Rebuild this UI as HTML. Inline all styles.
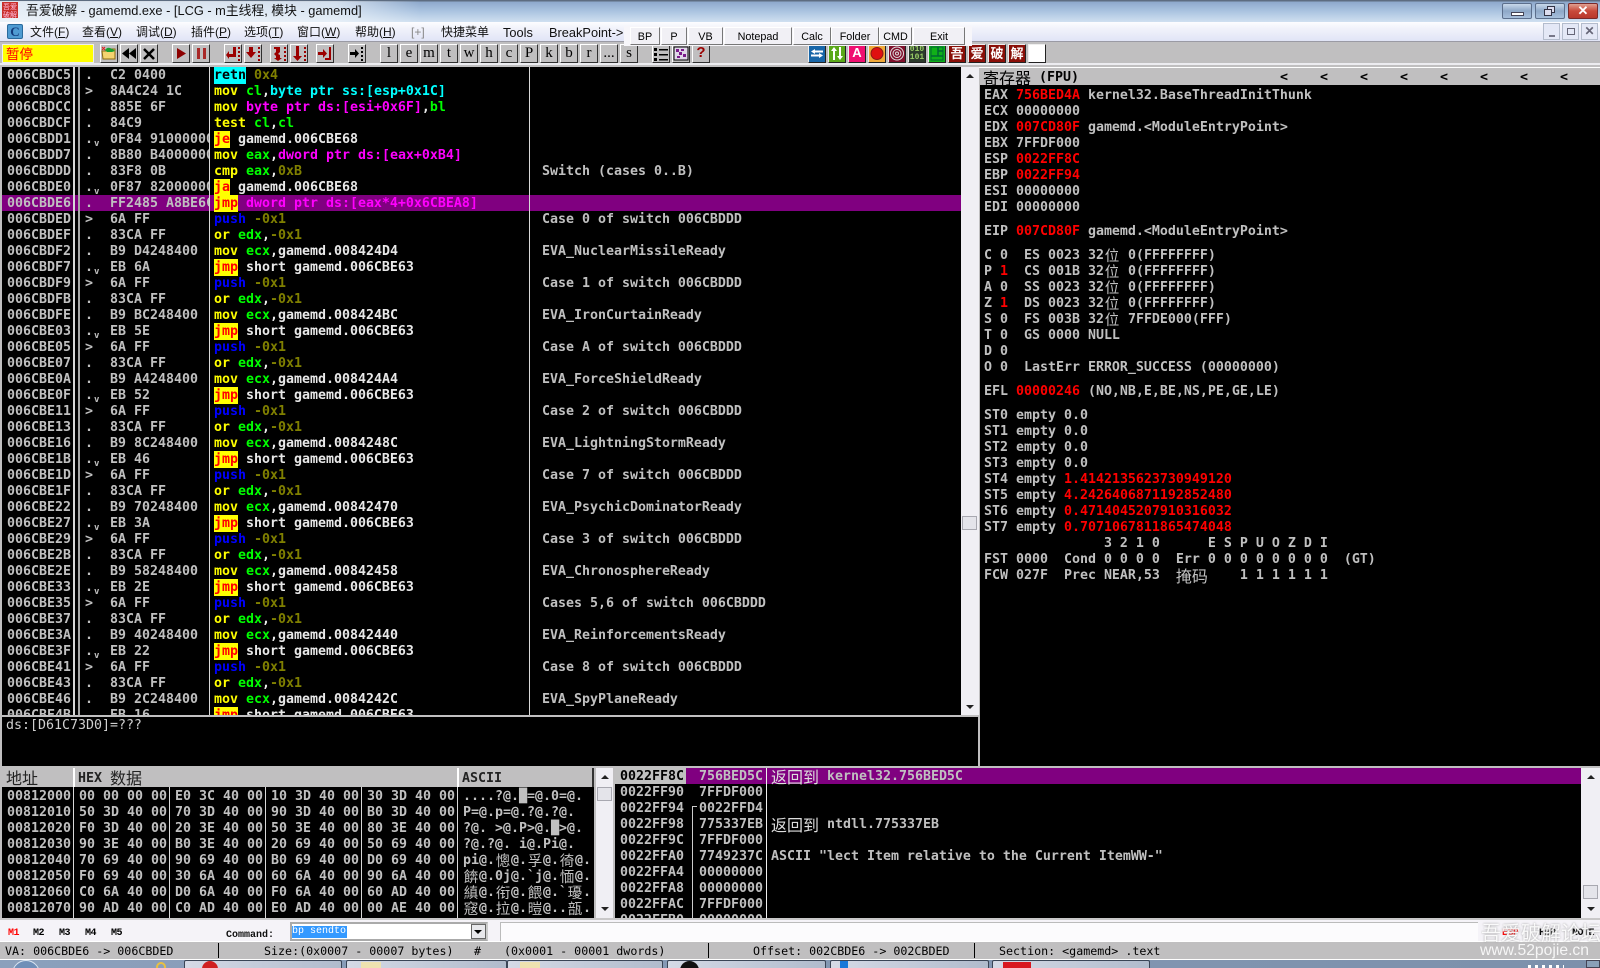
<!DOCTYPE html>
<html><head><meta charset="utf-8"><title>gamemd</title>
<style>
html,body{margin:0;padding:0}
html{overflow:hidden;width:1600px;height:968px}
body{width:1600px;height:968px;overflow:hidden;background:#c0bfc0;position:relative;font-family:"Liberation Sans","Noto Sans CJK SC",sans-serif}
div,span,svg{box-sizing:border-box}
.a{position:absolute}
.t{position:absolute;margin-top:1px;white-space:pre;font:bold 13.29px/16px "DejaVu Sans Mono","Liberation Mono","Noto Sans CJK SC",monospace;color:#c0c0c0}
.t i{font-style:normal}
.y{color:#ff0}.g{color:#0f0}.m{color:#f0f}.c{color:#0ff}.o{color:#808000}.b{color:#00f}.r{color:#f00}
.j{background:#ff0;color:#f00;display:inline-block;height:16px;line-height:16px;vertical-align:top;box-shadow:0 -1px 0 #ff0}
.w{color:#e8e8e8}
.k{display:inline-block;width:16px;height:16px;font:400 14.5px/16px "Noto Sans CJK SC",sans-serif;vertical-align:top;text-align:center;overflow:visible}
.s2{width:32px}.s3{width:48px}
.v{font:bold 9px/0 "DejaVu Sans Mono",monospace;position:relative;top:3px;margin-left:1px}
.l{position:absolute;background:#d8d8d8}
.btn{position:absolute;top:44px;width:18px;height:19px;background:#c0bfc0;border:1px solid;border-color:#fff #303030 #303030 #fff;text-align:center;font:15px/16px "Liberation Serif",serif;color:#000}
.btn svg{position:absolute;left:0;top:0}
.ic{position:absolute;top:44px;width:18px;height:19px;border:1px solid;border-color:#eee #222 #222 #eee;overflow:hidden;text-align:center}
.cj{background:#8a0f08;color:#fff;font:bold 13px/16px "Noto Sans CJK SC",sans-serif}
.tb{position:absolute;top:27px;height:18px;background:#f1f0f5;border:1px solid;border-color:#fff #777 #777 #fff;font:10.8px/18px "Liberation Sans",sans-serif;color:#000;text-align:center}
.m1{position:absolute;top:23px;font:12px/19px "Liberation Sans","Noto Sans CJK SC",sans-serif;color:#111;white-space:pre}
.m1 u{text-decoration:underline}
.sb{position:absolute;background:#f0eff4}
.th{position:absolute;background:#e4e4ea;border:1px solid #a8a8b0}
.ar{position:absolute;width:0;height:0;border-left:4px solid transparent;border-right:4px solid transparent}
.up{border-bottom:4px solid #222}.dn{border-top:4px solid #222}
.st{position:absolute;top:943px;font:11.67px/17px "DejaVu Sans Mono","Liberation Mono",monospace;color:#000;white-space:pre;letter-spacing:0}
.mm{position:absolute;top:927px;font:bold 10px/14px "Liberation Mono",monospace;color:#000;letter-spacing:-.5px}
.tab{position:absolute;top:960px;height:8px;background:linear-gradient(90deg,#d5dae6,#b0bbcc);border:1px solid #3a4556;border-bottom:0;border-radius:2px 2px 0 0;overflow:hidden}
</style></head><body>

<!-- title bar -->
<div class="a" style="left:0;top:0;width:1600px;height:22px;background:linear-gradient(#5d6c80 0,#5d6c80 1px,#8ea9cc 2px,#aac3e0 50%,#d0e0f0 100%)"></div>
<div class="a" style="left:0;top:1px;width:420px;height:21px;background:linear-gradient(90deg,rgba(240,245,250,.85),rgba(240,245,250,.7) 80%,rgba(240,245,250,0))"></div>
<svg class="a" style="left:2px;top:2px" width="16" height="16"><rect width="16" height="16" fill="#c8302c"/><text x="1" y="7" font-size="7" fill="#fbd" font-family="Noto Sans CJK SC">吾爱</text><text x="1" y="15" font-size="7" fill="#fbd" font-family="Noto Sans CJK SC">破解</text></svg>
<div class="a" style="left:26px;top:2px;font:12.8px/18px 'Liberation Sans','Noto Sans CJK SC',sans-serif;color:#111;white-space:pre">吾爱破解 - gamemd.exe - [LCG - m主线程, 模块 - gamemd]</div>
<div class="a" style="left:1502px;top:3px;width:30px;height:16px;border:1px solid #5c6f8c;border-radius:2px;background:linear-gradient(#c8d8ea,#8ea8c8 50%,#a8c0dc)"><div class="a" style="left:8px;top:8px;width:13px;height:4px;background:#fff;border:1px solid #445"></div></div>
<div class="a" style="left:1535px;top:3px;width:30px;height:16px;border:1px solid #5c6f8c;border-radius:2px;background:linear-gradient(#c8d8ea,#8ea8c8 50%,#a8c0dc)"><div class="a" style="left:11px;top:2px;width:8px;height:7px;background:#dde;border:1px solid #334"></div><div class="a" style="left:8px;top:5px;width:8px;height:7px;background:#dde;border:1px solid #334"></div></div>
<div class="a" style="left:1568px;top:3px;width:30px;height:16px;border:1px solid #7a2a2a;border-radius:2px;background:linear-gradient(#e0a090,#c8493a 50%,#b8382c);color:#fff;font:bold 13px/13px 'Liberation Sans',sans-serif;text-align:center">✕</div>

<!-- menu bar -->
<div class="a" style="left:0;top:22px;width:1600px;height:20px;background:linear-gradient(#fdfdff,#f2f3fb 30%,#dfe3f6)"></div>
<div class="a" style="left:0;top:41px;width:1600px;height:1px;background:#9a9aa4"></div>
<div class="a" style="left:7px;top:24px;width:16px;height:15px;background:#4f9bd2;border:1px solid #2a6a9c;border-radius:2px;font:bold 13px/13px 'Liberation Serif',serif;color:#123a7a;text-align:center">C</div>
<div class="m1" style="left:30px">文件(<u>F</u>)</div>
<div class="m1" style="left:82px">查看(<u>V</u>)</div>
<div class="m1" style="left:136px">调试(<u>D</u>)</div>
<div class="m1" style="left:191px">插件(<u>P</u>)</div>
<div class="m1" style="left:244px">选项(<u>T</u>)</div>
<div class="m1" style="left:297px">窗口(<u>W</u>)</div>
<div class="m1" style="left:355px">帮助(<u>H</u>)</div>
<div class="m1" style="left:411px;color:#888">[+]</div>
<div class="m1" style="left:441px">快捷菜单</div>
<div class="m1" style="left:503px;font-size:12.8px">Tools</div>
<div class="m1" style="left:549px;font-size:12.8px">BreakPoint-&gt;</div>
<div class="a" style="left:1543px;top:23px;width:17px;height:17px;background:#e4e8f6;border:1px solid #b4bccc"><div class="a" style="left:5px;top:11px;width:6px;height:2px;background:#778"></div></div>
<div class="a" style="left:1562px;top:23px;width:17px;height:17px;background:#e4e8f6;border:1px solid #b4bccc"><div class="a" style="left:4px;top:4px;width:8px;height:7px;border:1px solid #667"></div></div>
<div class="a" style="left:1581px;top:23px;width:17px;height:17px;background:#e4e8f6;border:1px solid #b4bccc;font:bold 12px/15px 'Liberation Sans',sans-serif;color:#667;text-align:center">✕</div>

<!-- toolbar -->
<div class="a" style="left:0;top:42px;width:1600px;height:23px;background:#c0bfc0;border-bottom:2px solid #ececf0"></div>
<div class="a" style="left:2px;top:44px;width:92px;height:19px;background:#ff0;border:1px solid #eee;font:13.5px/17px 'Noto Sans CJK SC',sans-serif;color:#f00;padding-left:3px">暂停</div>

<div class="btn" style="left:100px"><svg width="16" height="17"><path d="M1 6h4l2-2h7v10H2z" fill="#f4d470" stroke="#8a6a10"/><path d="M4 5q2-3 5-2t5 3l-3 1H6z" fill="#19a030"/><path d="M1 2l3 3M4 2L1 5" stroke="#d22" stroke-width="1"/></svg></div>
<div class="btn" style="left:120px"><svg width="16" height="17"><path d="M8 3v11L1 8.500zM15 3v11L8 8.500z" fill="#000"/></svg></div>
<div class="btn" style="left:140px"><svg width="16" height="17"><path d="M3 4l10 10M13 4L3 14" stroke="#000" stroke-width="2.500"/></svg></div>
<div class="btn" style="left:172px"><svg width="16" height="17"><path d="M4 3l9 5.500-9 5.500z" fill="#8c0000"/></svg></div>
<div class="btn" style="left:192px"><svg width="16" height="17"><path d="M4 3h3v11H4zM10 3h3v11h-3z" fill="#a82828"/></svg></div>
<div class="btn" style="left:224px"><svg width="16" height="17"><path d="M3 2h3v7h4V6l3 4-3 4v-2H3z" transform="matrix(-1 0 0 1 14 0)" fill="#9c0000"/><path d="M13 2h2v2h-2zM13 6h2v2h-2zM13 10h2v2h-2zM13 14h2v2h-2z" fill="#9c0000"/></svg></div>
<div class="btn" style="left:244px"><svg width="16" height="17"><path d="M4 2h4v5h3l-5 6-5-6h3z" fill="#9c0000"/><path d="M13 2h2v2h-2zM13 6h2v2h-2zM13 10h2v2h-2zM13 14h2v2h-2z" fill="#9c0000"/></svg></div>
<div class="btn" style="left:270px"><svg width="16" height="17"><path d="M3 2h6v5L7 9l2 1v3h2l-4 3-4-3h2v-2l-2-2 2-2V4H3z" fill="#9c0000"/><path d="M13 2h2v2h-2zM13 6h2v2h-2zM13 10h2v2h-2zM13 14h2v2h-2z" fill="#9c0000"/></svg></div>
<div class="btn" style="left:290px"><svg width="16" height="17"><path d="M5 1h3v10h3l-4.500 5L2 11h3z" fill="#9c0000"/><path d="M13 2h2v2h-2zM13 6h2v2h-2zM13 10h2v2h-2zM13 14h2v2h-2z" fill="#9c0000"/></svg></div>
<div class="btn" style="left:316px"><svg width="16" height="17"><path d="M1 7h5V4l4 4.500L6 13v-3H1z" fill="#9c0000"/><path d="M12 2h2v13H8v-2h4z" fill="#9c0000"/></svg></div>
<div class="btn" style="left:348px"><svg width="16" height="17"><path d="M1 7h5V4l4 4.500L6 13v-3H1z" fill="#000"/><path d="M12 2h2v2h-2zM12 6h2v2h-2zM12 10h2v2h-2zM12 14h2v2h-2z" fill="#000"/></svg></div>

<div class="btn" style="left:380px">l</div><div class="btn" style="left:400px">e</div><div class="btn" style="left:420px">m</div><div class="btn" style="left:440px">t</div><div class="btn" style="left:460px">w</div><div class="btn" style="left:480px">h</div><div class="btn" style="left:500px">c</div><div class="btn" style="left:520px">P</div><div class="btn" style="left:540px">k</div><div class="btn" style="left:560px">b</div><div class="btn" style="left:580px">r</div><div class="btn" style="left:600px">...</div><div class="btn" style="left:620px">s</div>
<div class="btn" style="left:652px"><svg width="16" height="17"><path d="M1 3h3v3H1zM1 8h3v3H1zM1 13h3v3H1zM6 4h9v1.500H6zM6 9h9v1.500H6zM6 14h9v1.500H6z" fill="#000"/></svg></div>
<div class="btn" style="left:672px"><svg width="16" height="17"><rect x="1" y="2" width="14" height="13" fill="#e0d8e8" stroke="#000"/><path d="M3 4h3v3H3zM8 4h3v2H8zM6 7h3v3H6zM10 9h3v3h-3zM4 11h3v2H4z" fill="#7a1a8a"/></svg></div>
<div class="btn" style="left:692px;color:#900;font:bold 15px/16px 'Liberation Sans',sans-serif">?</div>

<!-- colored icons -->
<div class="ic" style="left:808px;background:#1866a8"><svg width="16" height="17"><path d="M6 4L2 6.500 6 9V7.500h8v-2H6zM10 8l4 2.500-4 2.500v-1.500H2v-2h8z" fill="#fff"/></svg></div>
<div class="ic" style="left:828px;background:#5aa818"><svg width="16" height="17"><path d="M5 2l3 4H6v9H4V6H2zM11 15l-3-4h2V2h2v9h2z" fill="#fff"/></svg></div>
<div class="ic" style="left:848px;background:#f01070;color:#fff;font:bold 13px/16px 'Liberation Sans',sans-serif">A</div>
<div class="ic" style="left:868px;background:#f0a838"><svg width="16" height="17"><circle cx="8" cy="8.500" r="6" fill="#e01010" stroke="#8a1818"/></svg></div>
<div class="ic" style="left:888px;background:#80102c"><svg width="16" height="17" fill="none" stroke="#ddd"><circle cx="8" cy="8.500" r="6.500"/><circle cx="8" cy="8.500" r="4"/><circle cx="8" cy="8.500" r="1.500"/></svg></div>
<div class="ic" style="left:908px;background:#2c3a2c;color:#9c6;font:bold 8px/8px 'Liberation Mono',monospace;padding-top:1px">010<br>101</div>
<div class="ic" style="left:928px;background:#10b018"><svg width="16" height="17" fill="none" stroke="#063"><rect x="2" y="2" width="12" height="13"/><path d="M2 11h12M9 2v9M9 6h5" stroke-width="1.500"/></svg></div>
<div class="ic cj" style="left:948px">吾</div><div class="ic cj" style="left:968px">爱</div><div class="ic cj" style="left:988px">破</div><div class="ic cj" style="left:1008px">解</div>
<div class="ic" style="left:1028px;background:#fff"></div>

<!-- BP strip -->
<div class="a" style="left:624px;top:26px;width:348px;height:20px;background:#f7f6fa"></div>
<div class="tb" style="left:630px;width:30px">BP</div><div class="tb" style="left:661px;width:26px">P</div><div class="tb" style="left:688px;width:35px">VB</div><div class="tb" style="left:724px;width:68px">Notepad</div><div class="tb" style="left:793px;width:38px">Calc</div><div class="tb" style="left:831px;width:48px">Folder</div><div class="tb" style="left:879px;width:33px">CMD</div><div class="tb" style="left:913px;width:52px">Exit</div>

<!-- disasm -->
<div class="a" style="left:2px;top:67px;width:959px;height:648px;background:#000"></div>
<div class="a" style="left:2px;top:195px;width:959px;height:16px;background:#800080"></div>
<div class="a" style="left:0;top:67px;width:961px;height:648px;overflow:hidden">
<div class="t" style="left:7px;top:0">006CBDC5
006CBDC8
006CBDCC
006CBDCF
006CBDD1
006CBDD7
006CBDDD
006CBDE0
006CBDE6
006CBDED
006CBDEF
006CBDF2
006CBDF7
006CBDF9
006CBDFB
006CBDFE
006CBE03
006CBE05
006CBE07
006CBE0A
006CBE0F
006CBE11
006CBE13
006CBE16
006CBE1B
006CBE1D
006CBE1F
006CBE22
006CBE27
006CBE29
006CBE2B
006CBE2E
006CBE33
006CBE35
006CBE37
006CBE3A
006CBE3F
006CBE41
006CBE43
006CBE46
006CBE4B</div>
<div class="t" style="left:85px;top:0">.
&gt;
.
.
.<span class="v">v</span>
.
.
.<span class="v">v</span>
.
&gt;
.
.
.<span class="v">v</span>
&gt;
.
.
.<span class="v">v</span>
&gt;
.
.
.<span class="v">v</span>
&gt;
.
.
.<span class="v">v</span>
&gt;
.
.
.<span class="v">v</span>
&gt;
.
.
.<span class="v">v</span>
&gt;
.
.
.<span class="v">v</span>
&gt;
.
.
.<span class="v">v</span></div>
<div class="a" style="left:110px;top:0;width:99px;height:648px;overflow:hidden"><div class="t" style="left:0;top:0">C2 0400
8A4C24 1C
885E 6F
84C9
0F84 91000000
8B80 B4000000
83F8 0B
0F87 82000000
FF2485 A8BE6C00
6A FF
83CA FF
B9 D4248400
EB 6A
6A FF
83CA FF
B9 BC248400
EB 5E
6A FF
83CA FF
B9 A4248400
EB 52
6A FF
83CA FF
B9 8C248400
EB 46
6A FF
83CA FF
B9 70248400
EB 3A
6A FF
83CA FF
B9 58248400
EB 2E
6A FF
83CA FF
B9 40248400
EB 22
6A FF
83CA FF
B9 2C248400
EB 16</div></div>
<div class="t w" style="left:214px;top:0"><i style="background:#0ff;color:#000;display:inline-block;vertical-align:top;height:16px;line-height:16px;box-shadow:0 -1px 0 #0ff">retn</i> <i class="o">0x4</i>
<i class="y">mov</i> <i class="g">cl</i>,<i class="c">byte ptr ss:[esp+0x1C]</i>
<i class="y">mov</i> <i class="m">byte ptr ds:[esi+0x6F]</i>,<i class="g">bl</i>
<i class="y">test</i> <i class="g">cl</i>,<i class="g">cl</i>
<i class="j">je</i> gamemd.006CBE68
<i class="y">mov</i> <i class="g">eax</i>,<i class="m">dword ptr ds:[eax+0xB4]</i>
<i class="y">cmp</i> <i class="g">eax</i>,<i class="o">0xB</i>
<i class="j">ja</i> gamemd.006CBE68
<i class="j">jmp</i> <i class="m">dword ptr ds:[eax*4+0x6CBEA8]</i>
<i class="b">push</i> <i class="o">-0x1</i>
<i class="y">or</i> <i class="g">edx</i>,<i class="o">-0x1</i>
<i class="y">mov</i> <i class="g">ecx</i>,gamemd.008424D4
<i class="j">jmp</i> short gamemd.006CBE63
<i class="b">push</i> <i class="o">-0x1</i>
<i class="y">or</i> <i class="g">edx</i>,<i class="o">-0x1</i>
<i class="y">mov</i> <i class="g">ecx</i>,gamemd.008424BC
<i class="j">jmp</i> short gamemd.006CBE63
<i class="b">push</i> <i class="o">-0x1</i>
<i class="y">or</i> <i class="g">edx</i>,<i class="o">-0x1</i>
<i class="y">mov</i> <i class="g">ecx</i>,gamemd.008424A4
<i class="j">jmp</i> short gamemd.006CBE63
<i class="b">push</i> <i class="o">-0x1</i>
<i class="y">or</i> <i class="g">edx</i>,<i class="o">-0x1</i>
<i class="y">mov</i> <i class="g">ecx</i>,gamemd.0084248C
<i class="j">jmp</i> short gamemd.006CBE63
<i class="b">push</i> <i class="o">-0x1</i>
<i class="y">or</i> <i class="g">edx</i>,<i class="o">-0x1</i>
<i class="y">mov</i> <i class="g">ecx</i>,gamemd.00842470
<i class="j">jmp</i> short gamemd.006CBE63
<i class="b">push</i> <i class="o">-0x1</i>
<i class="y">or</i> <i class="g">edx</i>,<i class="o">-0x1</i>
<i class="y">mov</i> <i class="g">ecx</i>,gamemd.00842458
<i class="j">jmp</i> short gamemd.006CBE63
<i class="b">push</i> <i class="o">-0x1</i>
<i class="y">or</i> <i class="g">edx</i>,<i class="o">-0x1</i>
<i class="y">mov</i> <i class="g">ecx</i>,gamemd.00842440
<i class="j">jmp</i> short gamemd.006CBE63
<i class="b">push</i> <i class="o">-0x1</i>
<i class="y">or</i> <i class="g">edx</i>,<i class="o">-0x1</i>
<i class="y">mov</i> <i class="g">ecx</i>,gamemd.0084242C
<i class="j">jmp</i> short gamemd.006CBE63</div>
<div class="t" style="left:542px;top:0">





Switch (cases 0..B)


Case 0 of switch 006CBDDD

EVA_NuclearMissileReady

Case 1 of switch 006CBDDD

EVA_IronCurtainReady

Case A of switch 006CBDDD

EVA_ForceShieldReady

Case 2 of switch 006CBDDD

EVA_LightningStormReady

Case 7 of switch 006CBDDD

EVA_PsychicDominatorReady

Case 3 of switch 006CBDDD

EVA_ChronosphereReady

Cases 5,6 of switch 006CBDDD

EVA_ReinforcementsReady

Case 8 of switch 006CBDDD

EVA_SpyPlaneReady</div>
</div>
<div class="l" style="left:73px;top:67px;width:2px;height:648px"></div>
<div class="l" style="left:78px;top:67px;width:2px;height:648px;background:#a8a8a8"></div>
<div class="l" style="left:209px;top:67px;width:1px;height:648px"></div>
<div class="l" style="left:529px;top:67px;width:1px;height:648px"></div>
<div class="sb" style="left:961px;top:67px;width:18px;height:648px"></div>
<div class="ar up" style="left:966px;top:74px"></div><div class="ar dn" style="left:966px;top:705px"></div>
<div class="th" style="left:962px;top:516px;width:15px;height:14px"></div>
<div class="a" style="left:0;top:715px;width:979px;height:2px;background:#c0bfc0"></div>

<!-- info pane -->
<div class="a" style="left:2px;top:717px;width:976px;height:49px;background:#000"></div>
<div class="t" style="left:6px;top:717px;font-weight:400;color:#d0d0d0">ds:[D61C73D0]=???</div>

<!-- registers -->
<div class="a" style="left:979px;top:67px;width:621px;height:1px;background:#fff"></div>
<div class="a" style="left:980px;top:68px;width:620px;height:17px;background:#c0bfc0"></div>
<div class="t" style="left:983px;top:68px;color:#000;line-height:17px"><i class="k s3" style="font-size:16px;line-height:17px;text-align:left">寄存器</i> (FPU)</div>
<div class="t" style="left:1280px;top:68px;color:#000;line-height:17px">&lt;</div><div class="t" style="left:1320px;top:68px;color:#000;line-height:17px">&lt;</div><div class="t" style="left:1360px;top:68px;color:#000;line-height:17px">&lt;</div><div class="t" style="left:1400px;top:68px;color:#000;line-height:17px">&lt;</div><div class="t" style="left:1440px;top:68px;color:#000;line-height:17px">&lt;</div><div class="t" style="left:1480px;top:68px;color:#000;line-height:17px">&lt;</div><div class="t" style="left:1520px;top:68px;color:#000;line-height:17px">&lt;</div><div class="t" style="left:1560px;top:68px;color:#000;line-height:17px">&lt;</div>
<div class="a" style="left:980px;top:85px;width:620px;height:681px;background:#000"></div>
<div class="t" style="left:984px;top:87px">EAX <i class="r">756BED4A</i> kernel32.BaseThreadInitThunk
ECX 00000000
EDX <i class="r">007CD80F</i> gamemd.&lt;ModuleEntryPoint&gt;
EBX 7FFDF000
ESP <i class="r">0022FF8C</i>
EBP <i class="r">0022FF94</i>
ESI 00000000
EDI 00000000</div>
<div class="t" style="left:984px;top:223px">EIP <i class="r">007CD80F</i> gamemd.&lt;ModuleEntryPoint&gt;</div>
<div class="t" style="left:984px;top:247px">C 0  ES 0023 32<i class="k">位</i> 0(FFFFFFFF)
P <i class="r">1</i>  CS 001B 32<i class="k">位</i> 0(FFFFFFFF)
A 0  SS 0023 32<i class="k">位</i> 0(FFFFFFFF)
Z <i class="r">1</i>  DS 0023 32<i class="k">位</i> 0(FFFFFFFF)
S 0  FS 003B 32<i class="k">位</i> 7FFDE000(FFF)
T 0  GS 0000 NULL
D 0
O 0  LastErr ERROR_SUCCESS (00000000)</div>
<div class="t" style="left:984px;top:383px">EFL <i class="r">00000246</i> (NO,NB,E,BE,NS,PE,GE,LE)</div>
<div class="t" style="left:984px;top:407px">ST0 empty 0.0
ST1 empty 0.0
ST2 empty 0.0
ST3 empty 0.0
ST4 empty <i class="r">1.4142135623730949120</i>
ST5 empty <i class="r">4.2426406871192852480</i>
ST6 empty <i class="r">0.4714045207910316032</i>
ST7 empty <i class="r">0.7071067811865474048</i>
               3 2 1 0      E S P U O Z D I
FST 0000  Cond 0 0 0 0  Err 0 0 0 0 0 0 0 0  (GT)
FCW 027F  Prec NEAR,53  <i class="k s2" style="font-size:16px;position:relative;top:-1px">掩码</i>    1 1 1 1 1 1</div>

<!-- dump -->
<div class="a" style="left:0;top:766px;width:1600px;height:2px;background:#c0bfc0"></div>
<div class="a" style="left:2px;top:768px;width:592px;height:19px;background:#c0bfc0"></div>
<div class="a" style="left:6px;top:768px;font:400 16px/19px 'Noto Sans CJK SC',sans-serif;color:#222">地址</div>
<div class="t" style="left:78px;top:768px;color:#222;line-height:19px">HEX <i class="k s2" style="font-size:16px;line-height:17px">数据</i></div>
<div class="t" style="left:462px;top:768px;color:#222;line-height:19px">ASCII</div>
<div class="a" style="left:73px;top:768px;width:2px;height:19px;background:#fff"></div>
<div class="a" style="left:457px;top:768px;width:2px;height:19px;background:#fff"></div>
<div class="a" style="left:592px;top:768px;width:2px;height:19px;background:#333"></div>
<div class="a" style="left:2px;top:787px;width:592px;height:131px;background:#000"></div>
<div class="t" style="left:7px;top:788px">00812000
00812010
00812020
00812030
00812040
00812050
00812060
00812070</div>
<div class="t" style="left:79px;top:788px">00 00 00 00
50 3D 40 00
F0 3D 40 00
90 3E 40 00
70 69 40 00
F0 69 40 00
C0 6A 40 00
90 AD 40 00</div>
<div class="t" style="left:175px;top:788px">E0 3C 40 00
70 3D 40 00
20 3E 40 00
B0 3E 40 00
90 69 40 00
30 6A 40 00
D0 6A 40 00
C0 AD 40 00</div>
<div class="t" style="left:271px;top:788px">10 3D 40 00
90 3D 40 00
50 3E 40 00
20 69 40 00
B0 69 40 00
60 6A 40 00
F0 6A 40 00
E0 AD 40 00</div>
<div class="t" style="left:367px;top:788px">30 3D 40 00
B0 3D 40 00
80 3E 40 00
50 69 40 00
D0 69 40 00
90 6A 40 00
60 AD 40 00
00 AE 40 00</div>
<div class="t" style="left:463px;top:788px">....?@.█=@.0=@.
P=@.p=@.?@.?@.
?@. &gt;@.P&gt;@.█&gt;@.
?@.?@. i@.Pi@.
pi@.<i class="k">憁</i>@.<i class="k">孚</i>@.<i class="k">徛</i>@.
<i class="k">餴</i>@.0j@.`j@.<i class="k">愐</i>@.
<i class="k">縝</i>@.<i class="k">衔</i>@.<i class="k">餵</i>@.`<i class="k">瓇</i>.
<i class="k">窛</i>@.<i class="k">拉</i>@.<i class="k">暟</i>@..<i class="k">瓿</i>.</div>
<div class="l" style="left:73px;top:787px;width:1px;height:131px"></div>
<div class="l" style="left:169px;top:787px;width:1px;height:131px"></div>
<div class="l" style="left:265px;top:787px;width:1px;height:131px"></div>
<div class="l" style="left:361px;top:787px;width:1px;height:131px"></div>
<div class="l" style="left:457px;top:787px;width:1px;height:131px"></div>
<div class="sb" style="left:594px;top:768px;width:21px;height:150px"></div>
<div class="a" style="left:594px;top:768px;width:2px;height:150px;background:#c0bfc0"></div>
<div class="a" style="left:613px;top:768px;width:2px;height:150px;background:#c0bfc0"></div>
<div class="ar up" style="left:601px;top:775px"></div><div class="ar dn" style="left:601px;top:907px"></div>
<div class="th" style="left:597px;top:787px;width:15px;height:14px"></div>

<!-- stack -->
<div class="a" style="left:615px;top:768px;width:966px;height:150px;background:#000"></div>
<div class="a" style="left:615px;top:768px;width:71px;height:16px;background:#c0c0c0"></div>
<div class="a" style="left:686px;top:768px;width:895px;height:16px;background:#800080"></div>
<div class="a" style="left:615px;top:768px;width:966px;height:150px;overflow:hidden">
<div class="t" style="left:5px;top:0"><i style="color:#000">0022FF8C</i>
0022FF90
0022FF94
0022FF98
0022FF9C
0022FFA0
0022FFA4
0022FFA8
0022FFAC
0022FFB0</div>
<div class="t" style="left:84px;top:0">756BED5C
7FFDF000
0022FFD4
775337EB
7FFDF000
7749237C
00000000
00000000
7FFDF000
00000000</div>
<div class="t" style="left:156px;top:0"><i class="k s3" style="color:#ddd;font-size:16px;line-height:14px;text-align:left">返回到</i> kernel32.756BED5C


<i class="k s3" style="color:#ddd;font-size:16px;line-height:14px;text-align:left">返回到</i> ntdll.775337EB

ASCII "lect Item relative to the Current ItemWW-"</div>
</div>
<div class="a" style="left:692px;top:806px;width:1px;height:112px;background:#ccc"></div>
<div class="a" style="left:692px;top:806px;width:5px;height:1px;background:#ccc"></div>
<div class="l" style="left:766px;top:768px;width:1px;height:150px;background:#eee"></div>
<div class="sb" style="left:1581px;top:768px;width:19px;height:150px"></div>
<div class="ar up" style="left:1587px;top:775px"></div><div class="ar dn" style="left:1587px;top:907px"></div>
<div class="th" style="left:1583px;top:885px;width:15px;height:14px"></div>

<!-- bottom bar -->
<div class="a" style="left:0;top:918px;width:1600px;height:24px;background:#f5f3f8;border-top:2px solid #c8c7c8"></div>
<div class="mm" style="left:8px;color:#f00">M1</div><div class="mm" style="left:33px">M2</div><div class="mm" style="left:59px">M3</div><div class="mm" style="left:85px">M4</div><div class="mm" style="left:111px">M5</div>
<div class="a" style="left:226px;top:929px;font:bold 10px/14px 'Liberation Mono',monospace;color:#111;white-space:pre">Command:</div>
<div class="a" style="left:290px;top:922px;width:198px;height:19px;background:#fff;border:2px solid #aaa;border-right-color:#ccc"></div>
<div class="a" style="left:292px;top:926px;width:55px;height:12px;background:#3399ff;color:#fff;font:10px/12px 'Liberation Mono',monospace;white-space:pre">bp sendto</div>
<div class="a" style="left:471px;top:924px;width:15px;height:15px;background:#e8e8ec;border:1px solid #666"></div>
<div class="ar dn" style="left:474px;top:930px;border-top-color:#000"></div>
<div class="a" style="left:500px;top:922px;width:978px;height:19px;background:#fcfbfd;border:1px solid #bbb;border-right:0;border-bottom:0"></div>
<div class="mm" style="left:1502px;color:#f00">ESP</div><div class="mm" style="left:1539px">HBP</div><div class="mm" style="left:1572px">NOTE</div>

<!-- status bar -->
<div class="a" style="left:0;top:941px;width:1600px;height:19px;background:#c0bfc0;border-top:1px solid #fff;border-bottom:1px solid #fff"></div>
<div class="st" style="left:5px">VA: 006CBDE6 -&gt; 006CBDED</div>
<div class="a" style="left:218px;top:943px;width:1px;height:15px;background:#000"></div>
<div class="st" style="left:264px">Size:(0x0007 - 00007 bytes)</div>
<div class="st" style="left:474px">#</div>
<div class="st" style="left:504px">(0x0001 - 00001 dwords)</div>
<div class="a" style="left:708px;top:943px;width:1px;height:15px;background:#000"></div>
<div class="st" style="left:753px">Offset: 002CBDE6 -&gt; 002CBDED</div>
<div class="a" style="left:974px;top:943px;width:1px;height:15px;background:#000"></div>
<div class="st" style="left:999px">Section: &lt;gamemd&gt; .text</div>

<!-- taskbar -->
<div class="a" style="left:0;top:960px;width:1600px;height:8px;overflow:hidden;background:linear-gradient(90deg,#8ba0bc,#7c90ab)">
<div class="a" style="left:12px;top:0;width:28px;height:28px;border-radius:50%;background:#6f8fb8;border:1px solid #d8e4f0"></div>
<div class="a" style="left:156px;top:2px;width:10px;height:10px;border-radius:50%;border:2px solid #e8c040"></div>
</div>
<div class="tab" style="left:184px;width:158px"><div class="a" style="left:17px;top:0;width:16px;height:16px;border-radius:50%;background:#d02020"></div></div>
<div class="tab" style="left:346px;width:161px"><div class="a" style="left:14px;top:1px;width:20px;height:8px;background:#eee2b0"></div></div>
<div class="tab" style="left:507px;width:156px"><div class="a" style="left:12px;top:1px;width:20px;height:8px;background:#eee2b0"></div></div>
<div class="tab" style="left:667px;width:159px"><div class="a" style="left:12px;top:0;width:19px;height:19px;border-radius:50%;background:#111"></div></div>
<div class="tab" style="left:830px;width:159px"><div class="a" style="left:9px;top:0;width:8px;height:8px;background:#1a78d8"></div></div>
<div class="tab" style="left:992px;width:158px"><div class="a" style="left:10px;top:1px;width:28px;height:8px;background:#d81820"></div></div>
<div class="a" style="left:1528px;top:965px;width:36px;height:3px;background:repeating-linear-gradient(90deg,#fff 0 3px,transparent 3px 7px)"></div>
<div class="a" style="left:1586px;top:960px;width:14px;height:8px;background:#8aa0b8;border:1px solid #445"></div>

<!-- watermark -->
<div class="a" style="left:1481px;top:920px;font:400 20px/24px 'Noto Sans CJK SC',sans-serif;color:rgba(255,255,255,.9);text-shadow:0 0 2px #999;white-space:pre;width:119px;overflow:hidden">吾爱破解论坛</div>
<div class="a" style="left:1480px;top:941px;font:15.7px/20px 'Liberation Sans',sans-serif;color:rgba(255,255,255,.85);white-space:pre">www.52pojie.cn</div>
</body></html>
